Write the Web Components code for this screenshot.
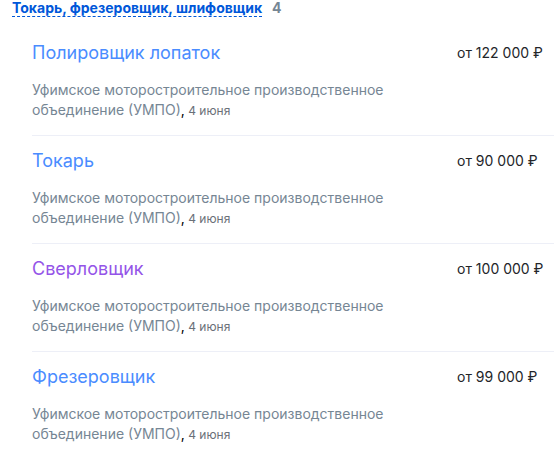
<!DOCTYPE html>
<html lang="ru">
<head>
<meta charset="utf-8">
<title>Вакансии</title>
<style>
body{margin:0;background:#fff;color:#000;font-family:Inter,"Liberation Sans",sans-serif}
</style>
</head>
<body>
<vacancy-group heading="Токарь, фрезеровщик, шлифовщик" count="4">
<vacancy-item name="Полировщик лопаток" pay="от 122 000 ₽"></vacancy-item>
<vacancy-item name="Токарь" pay="от 90 000 ₽"></vacancy-item>
<vacancy-item name="Сверловщик" pay="от 100 000 ₽" visited></vacancy-item>
<vacancy-item name="Фрезеровщик" pay="от 99 000 ₽"></vacancy-item>
</vacancy-group>
<script>
customElements.define('vacancy-group', class extends HTMLElement {
  connectedCallback() {
    const root = this.attachShadow({mode: 'open'});
    root.innerHTML = `<style>
      :host{display:block}
      header{display:flex;gap:10px;padding-left:12px;font-size:14px;line-height:16px;font-weight:700}
      a{color:#0057d9;text-decoration:none;border-bottom:1px dashed currentColor}
      span{color:#768694}
      .list{padding:11px 0 0 32px}
    </style>
    <header><a href="#"></a><span></span></header>
    <div class="list"><slot></slot></div>`;
    root.querySelector('a').textContent = this.getAttribute('heading');
    root.querySelector('span').textContent = this.getAttribute('count');
  }
});
customElements.define('vacancy-item', class extends HTMLElement {
  connectedCallback() {
    const root = this.attachShadow({mode: 'open'});
    root.innerHTML = `<style>
      :host{display:grid;grid-template-columns:minmax(0,1fr) 97px;padding:12px 0 15px;border-bottom:1px solid #edeff7}
      :host(:last-of-type){border-bottom:0}
      h3{margin:0 0 14px;font-size:18px;line-height:26px;font-weight:400}
      a{color:#4a8cff;text-decoration:none}
      :host([visited]) a{color:#9454e8}
      .pay{font-size:14px;line-height:26px;color:#232529;white-space:nowrap}
      p{margin:0;font-size:14px;line-height:20px;color:#000;max-width:360px}
      .company{color:#768694}
      time{font-size:12px;line-height:16px;color:#6a7078}
    </style>
    <div><h3><a href="#"></a></h3>
    <p><span class="company">Уфимское моторостроительное производственное объединение (УМПО)</span>,<time datetime="06-04"> 4 июня</time></p></div>
    <div class="pay"></div>`;
    root.querySelector('a').textContent = this.getAttribute('name');
    root.querySelector('.pay').textContent = this.getAttribute('pay');
  }
});
</script>
</body>
</html>
